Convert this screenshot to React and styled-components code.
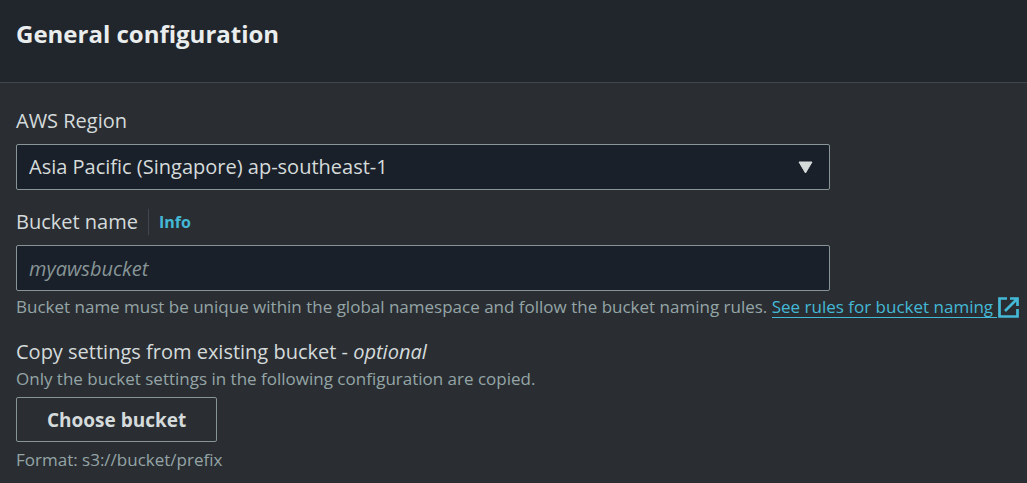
import React from "react";
import styled, { createGlobalStyle } from "styled-components";

const GlobalStyle = createGlobalStyle`
  *, *::before, *::after { box-sizing: border-box; }
  body {
    margin: 0;
    background: #2a2e33;
    color: #d5dbdb;
    font-family: "Open Sans", "Noto Sans", sans-serif;
    font-size: 20px;
    line-height: 28px;
  }
`;

const Header = styled.header`
  padding: 16px 16px 30px;
  background: #21252c;
  border-bottom: 1px solid #414750;
`;

const Title = styled.h2`
  margin: 0;
  color: #eaeded;
  font-size: 24px;
  font-weight: 700;
  line-height: 36px;
`;

const Form = styled.form`
  display: flex;
  flex-direction: column;
  gap: 18px;
  padding: 24px 4px 8px 16px;
`;

const Field = styled.div`
  display: flex;
  flex-direction: column;
  align-items: flex-start;
`;

const LabelRow = styled.div`
  display: flex;
  align-items: center;
  gap: 10px;
  margin-bottom: 9px;
`;

const Label = styled.label`
  color: #d5dbdb;
`;

const InfoLink = styled.a`
  padding-left: 10px;
  border-left: 1px solid #414750;
  color: #44b9d6;
  font-size: 16px;
  font-weight: 700;
  line-height: 26px;
  text-decoration: none;
`;

const ControlFrame = styled.div`
  display: flex;
  align-items: center;
  width: 100%;
  max-width: 814px;
  height: 46px;
  background: #1a2029;
  border: 1px solid #879596;
  border-radius: 2px;
`;

const Select = styled.select`
  width: 100%;
  height: 100%;
  padding: 0 12px;
  border: 0;
  appearance: none;
  background: transparent;
  color: inherit;
  font: inherit;
`;

const SelectArrow = styled.svg`
  flex: none;
  margin-right: 16px;
  pointer-events: none;
`;

const TextInput = styled.input`
  width: 100%;
  height: 100%;
  padding: 0 12px;
  border: 0;
  background: transparent;
  color: inherit;
  font: inherit;

  &::placeholder {
    color: #879596;
    font-style: italic;
    opacity: 1;
  }
`;

const Hint = styled.p`
  margin: 0;
  color: #95a5a6;
  font-size: 17px;
  line-height: 26px;
`;

const InputHint = styled(Hint)`
  margin-top: 3px;
`;

const ExternalLink = styled.a`
  color: #44b9d6;
  text-decoration: none;
  white-space: nowrap;
`;

const LinkText = styled.span`
  padding-right: 4px;
  background: linear-gradient(#44b9d6, #44b9d6) 0 100% / 100% 1px no-repeat;
`;

const ExternalIcon = styled.svg`
  vertical-align: -5px;
  margin-left: 1px;
`;

const Button = styled.button`
  height: 45px;
  margin: 5px 0;
  padding: 0 30px;
  background: transparent;
  border: 1px solid #879596;
  border-radius: 2px;
  color: #d5dbdb;
  font-family: inherit;
  font-size: 19px;
  font-weight: 700;
`;

export default function App() {
  return (
    <main>
      <GlobalStyle />
      <Header>
        <Title>General configuration</Title>
      </Header>
      <Form>
        <Field>
          <LabelRow>
            <Label htmlFor="region">AWS Region</Label>
          </LabelRow>
          <ControlFrame>
            <Select id="region" defaultValue="ap-southeast-1">
              <option value="ap-southeast-1">Asia Pacific (Singapore) ap-southeast-1</option>
            </Select>
            <SelectArrow width="15" height="13" viewBox="0 0 15 13" aria-hidden="true">
              <path d="M1 1h13L7.500 12z" fill="#d5dbdb" stroke="#d5dbdb" strokeLinejoin="round" />
            </SelectArrow>
          </ControlFrame>
        </Field>
        <Field>
          <LabelRow>
            <Label htmlFor="bucket">Bucket name</Label>
            <InfoLink href="#info">Info</InfoLink>
          </LabelRow>
          <ControlFrame>
            <TextInput id="bucket" type="text" placeholder="myawsbucket" />
          </ControlFrame>
          <InputHint>
            Bucket name must be unique within the global namespace and follow the bucket naming rules.{" "}
            <ExternalLink href="#rules">
              <LinkText>See rules for bucket naming</LinkText>
              <ExternalIcon width="21" height="21" viewBox="0 0 21 21" fill="none" stroke="#44b9d6" strokeWidth="2.700" aria-hidden="true">
                <path d="M9 1.500H1.500v18h18V12M12 1.500h7.500V9M19.500 1.500L7 14" />
              </ExternalIcon>
            </ExternalLink>
          </InputHint>
        </Field>
        <Field>
          <Label htmlFor="choose">
            Copy settings from existing bucket - <em>optional</em>
          </Label>
          <Hint>Only the bucket settings in the following configuration are copied.</Hint>
          <Button id="choose" type="button">Choose bucket</Button>
          <Hint>Format: s3://bucket/prefix</Hint>
        </Field>
      </Form>
    </main>
  );
}
